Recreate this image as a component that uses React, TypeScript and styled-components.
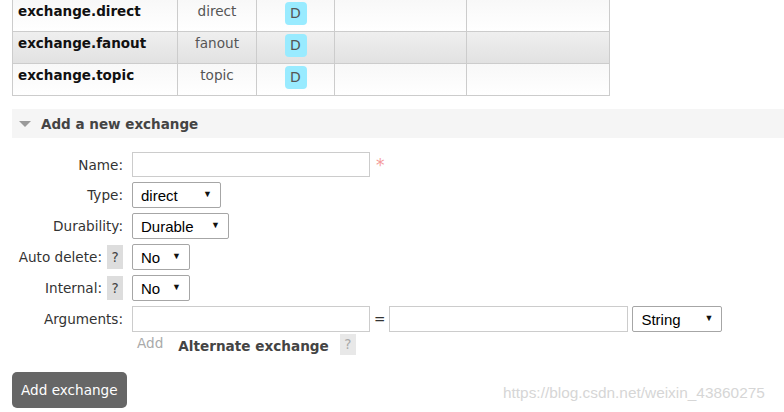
import React from 'react'
import styled, { createGlobalStyle } from 'styled-components'

const GlobalStyle = createGlobalStyle`
  html, body {
    margin: 0;
    padding: 0;
    background: #fff;
  }
  body {
    font-family: "DejaVu Sans", Verdana, sans-serif;
    font-size: 13.6px;
    color: #333;
    overflow: hidden;
  }
`

interface Exchange {
  name: string
  type: string
  stripe: boolean
}

const exchanges: Exchange[] = [
  { name: 'exchange.direct', type: 'direct', stripe: false },
  { name: 'exchange.fanout', type: 'fanout', stripe: true },
  { name: 'exchange.topic', type: 'topic', stripe: false },
]

const App: React.FC = () => {
  return (
    <Page>
      <GlobalStyle />
      <List>
        <colgroup>
          <col style={{ width: 165 }} />
          <col style={{ width: 79 }} />
          <col style={{ width: 78 }} />
          <col style={{ width: 132 }} />
          <col />
        </colgroup>
        <tbody>
          {exchanges.map((ex) => (
            <Row key={ex.name} stripe={ex.stripe}>
              <NameCell>{ex.name}</NameCell>
              <TypeCell>{ex.type}</TypeCell>
              <TypeCell>
                <Badge>D</Badge>
              </TypeCell>
              <Cell />
              <Cell />
            </Row>
          ))}
        </tbody>
      </List>

      <SectionHeader>
        <Arrow />
        <SectionTitle>Add a new exchange</SectionTitle>
      </SectionHeader>

      <Form>
        <Label>Name:</Label>
        <Field>
          <TextInput width={238} short />
          <Required>*</Required>
        </Field>

        <Label>Type:</Label>
        <Field>
          <Select width={89} value="direct" />
        </Field>

        <Label>Durability:</Label>
        <Field>
          <Select width={97} value="Durable" />
        </Field>

        <Label>
          Auto delete:<Help>?</Help>
        </Label>
        <Field>
          <Select width={58} value="No" />
        </Field>

        <Label>
          Internal:<Help>?</Help>
        </Label>
        <Field>
          <Select width={58} value="No" />
        </Field>

        <Label>Arguments:</Label>
        <Field>
          <TextInput width={238} />
          <Equals>=</Equals>
          <TextInput width={239} />
          <Spacer />
          <Select width={90} value="String" />
        </Field>

        <span />
        <SubRow>
          <AddLink>Add</AddLink>
          <SubTitle>Alternate exchange</SubTitle>
          <Help faded>?</Help>
        </SubRow>
      </Form>

      <Button>Add exchange</Button>

      <Watermark>https://blog.csdn.net/weixin_43860275</Watermark>
    </Page>
  )
}

const Select: React.FC<{ width: number; value: string }> = ({ width, value }) => (
  <SelectBox style={{ width }}>
    <span>{value}</span>
    <Caret>▼</Caret>
  </SelectBox>
)

const Page = styled.div`
  position: relative;
  width: 784px;
  height: 412px;
  padding-left: 12px;
  box-sizing: border-box;
`

const List = styled.table`
  width: 598px;
  margin-top: -1px;
  border-collapse: collapse;
  table-layout: fixed;
`

const Row = styled.tr<{ stripe: boolean }>`
  background: ${(p) =>
    p.stripe
      ? 'linear-gradient(#efefef, #e1e1e1)'
      : 'linear-gradient(#f8f8f8, #ffffff)'};
`

const Cell = styled.td`
  height: 27px;
  padding: 2px 5px;
  border: 1px solid #cccccc;
  vertical-align: top;
  line-height: 18px;
`

const NameCell = styled(Cell)`
  font-weight: bold;
  font-size: 13.5px;
  color: #111;
`

const TypeCell = styled(Cell)`
  text-align: center;
  color: #555;
`

const Badge = styled.span`
  display: inline-block;
  width: 22px;
  height: 23px;
  line-height: 23px;
  border-radius: 4px;
  background: #99ebff;
  color: #555;
  font-size: 14px;
  text-align: center;
`

const SectionHeader = styled.div`
  display: flex;
  align-items: center;
  height: 29px;
  margin-top: 13px;
  background: #f5f5f5;
  padding-left: 7px;
`

const Arrow = styled.span`
  width: 0;
  height: 0;
  border-left: 6px solid transparent;
  border-right: 6px solid transparent;
  border-top: 6px solid #9a9a9a;
  margin-right: 10px;
  margin-top: 1px;
`

const SectionTitle = styled.h2`
  margin: 0;
  font-size: 13.5px;
  font-weight: bold;
  color: #444;
`

const Form = styled.div`
  display: grid;
  grid-template-columns: 112px 1fr;
  column-gap: 8px;
  row-gap: 5px;
  margin-top: 14px;
`

const Label = styled.label`
  display: flex;
  align-items: center;
  justify-content: flex-end;
  gap: 5px;
  padding-right: 1px;
  color: #333;
  white-space: nowrap;
`

const Field = styled.div`
  display: flex;
  align-items: center;
`

const TextInput = styled.input<{ width: number; short?: boolean }>`
  width: ${(p) => p.width}px;
  height: ${(p) => (p.short ? 25 : 26)}px;
  box-sizing: border-box;
  border: 1px solid #cccccc;
  margin: 0;
  padding: 0 4px;
  font: inherit;
`

const Required = styled.span`
  color: #f49a9a;
  font-size: 17px;
  line-height: 17px;
  margin-left: 6px;
  margin-top: 2px;
`

const SelectBox = styled.div`
  position: relative;
  height: 26px;
  box-sizing: border-box;
  border: 1px solid #a6a6a6;
  border-radius: 2px;
  background: #fff;
  display: flex;
  align-items: center;
  padding-left: 8px;
  font-family: "Liberation Sans", Arial, sans-serif;
  font-size: 15px;
  color: #000;
`

const Caret = styled.span`
  position: absolute;
  right: 8px;
  top: 6px;
  font-size: 9px;
  color: #111;
`

const Help = styled.span<{ faded?: boolean }>`
  display: inline-block;
  width: 16px;
  height: ${(p) => (p.faded ? 21 : 24)}px;
  line-height: ${(p) => (p.faded ? 21 : 24)}px;
  text-align: center;
  background: ${(p) => (p.faded ? '#e8e8e8' : '#dddddd')};
  color: ${(p) => (p.faded ? '#aaa' : '#444')};
  font-weight: normal;
`

const Equals = styled.span`
  margin: 0 4px 0 4px;
  color: #333;
`

const Spacer = styled.span`
  width: 4px;
`

const SubRow = styled.div`
  display: flex;
  align-items: flex-start;
  margin-top: -3px;
  padding-left: 5px;
`

const AddLink = styled.span`
  color: #aaa;
  line-height: 16px;
  margin-top: 1px;
`

const SubTitle = styled.span`
  font-weight: bold;
  color: #444;
  margin: 4px 11px 0 15px;
  line-height: 16px;
`

const Button = styled.button`
  display: block;
  margin-top: 17px;
  height: 36px;
  padding: 0 9px;
  border: none;
  border-radius: 5px;
  background: #666;
  color: #fff;
  font: inherit;
`

const Watermark = styled.div`
  position: absolute;
  left: 503px;
  top: 385px;
  font-family: "Liberation Sans", Arial, sans-serif;
  font-size: 15.4px;
  color: #d6d6d6;
  pointer-events: none;
`

export default App
